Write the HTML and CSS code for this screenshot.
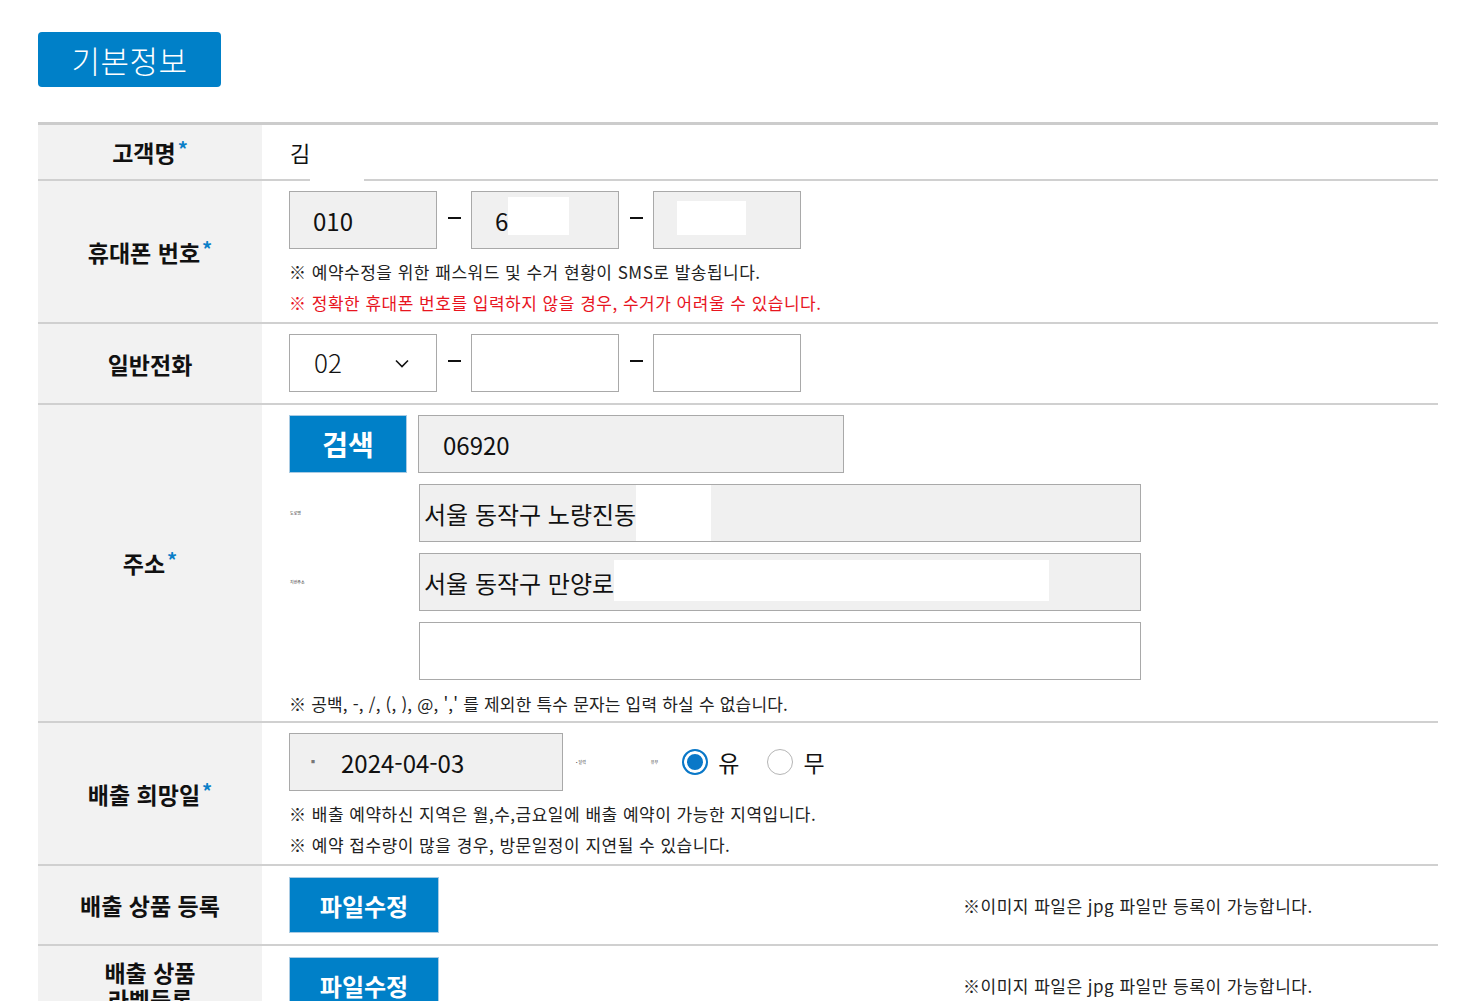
FILE: index.html
```html
<!DOCTYPE html>
<html lang="ko">
<head>
<meta charset="utf-8">
<title>기본정보</title>
<link rel="stylesheet" href="styles.css">
</head>
<body>
<div class="page">
  <div class="title">기본정보</div>

  <div class="form">
    <div class="row">
      <div class="label">고객명<span class="req">*</span></div>
      <div class="cell cell-name">김<span class="gap-mask"></span></div>
    </div>

    <div class="row">
      <div class="label">휴대폰 번호<span class="req">*</span></div>
      <div class="cell">
        <div class="line">
          <div class="field grey phone">010</div>
          <span class="dash"><i></i></span>
          <div class="field grey phone">6<span class="mask mask-a"></span></div>
          <span class="dash"><i></i></span>
          <div class="field grey phone"><span class="mask mask-b"></span></div>
        </div>
        <div class="hints">
          <p>※ 예약수정을 위한 패스워드 및 수거 현황이 SMS로 발송됩니다.</p>
          <p class="red">※ 정확한 휴대폰 번호를 입력하지 않을 경우, 수거가 어려울 수 있습니다.</p>
        </div>
      </div>
    </div>

    <div class="row">
      <div class="label">일반전화</div>
      <div class="cell cell-tel">
        <div class="line">
          <div class="field select phone"><span class="sel-val">02</span>
            <svg class="chev" width="14" height="9" viewBox="0 0 14 9"><polyline points="1,1.5 7,7.5 13,1.5" fill="none" stroke="#111" stroke-width="1.6"/></svg>
          </div>
          <span class="dash"><i></i></span>
          <div class="field white phone"></div>
          <span class="dash"><i></i></span>
          <div class="field white phone"></div>
        </div>
      </div>
    </div>

    <div class="row">
      <div class="label">주소<span class="req">*</span></div>
      <div class="cell cell-addr">
        <div class="line">
          <button class="btn btn-search">검색</button>
          <div class="field grey zip">06920</div>
        </div>
        <div class="line addr-line">
          <span class="tiny-label">도로명</span>
          <div class="field grey addr">서울 동작구 노량진동<span class="mask mask-c"></span></div>
        </div>
        <div class="line addr-line">
          <span class="tiny-label">지번주소</span>
          <div class="field grey addr">서울 동작구 만양로<span class="mask mask-d"></span></div>
        </div>
        <div class="line addr-line">
          <span class="tiny-label"></span>
          <div class="field white addr detail"></div>
        </div>
        <p class="hint-special">※ 공백, -, /, (, ), @, ',' 를 제외한 특수 문자는 입력 하실 수 없습니다.</p>
      </div>
    </div>

    <div class="row">
      <div class="label">배출 희망일<span class="req">*</span></div>
      <div class="cell">
        <div class="line">
          <div class="field grey date"><span class="tiny-icon">■</span>2024-04-03</div>
          <span class="tiny t1">• 달력</span>
          <span class="tiny t2">유무</span>
          <span class="radio checked"></span><span class="radio-text">유</span>
          <span class="radio"></span><span class="radio-text">무</span>
        </div>
        <div class="hints">
          <p>※ 배출 예약하신 지역은 월,수,금요일에 배출 예약이 가능한 지역입니다.</p>
          <p>※ 예약 접수량이 많을 경우, 방문일정이 지연될 수 있습니다.</p>
        </div>
      </div>
    </div>

    <div class="row">
      <div class="label">배출 상품 등록</div>
      <div class="cell cell-file">
        <button class="btn btn-file">파일수정</button>
        <span class="file-note">※이미지 파일은 jpg 파일만 등록이 가능합니다.</span>
      </div>
    </div>

    <div class="row">
      <div class="label label-two">배출 상품<br>라벨등록</div>
      <div class="cell cell-file">
        <button class="btn btn-file">파일수정</button>
        <span class="file-note">※이미지 파일은 jpg 파일만 등록이 가능합니다.</span>
      </div>
    </div>
  </div>
</div>
</body>
</html>
```

FILE: styles.css
```css
* { box-sizing: border-box; }

body {
  margin: 0;
  background: #fff;
  color: #111;
  font-family: "Noto Sans CJK KR", "Noto Sans", sans-serif;
}

.page {
  padding: 32px 33px 0 38px;
}

.title {
  display: flex;
  align-items: center;
  justify-content: center;
  width: 183px;
  height: 55px;
  background: #0080c8;
  color: #fff;
  border-radius: 4px;
  font-size: 31px;
  font-weight: 300;
  letter-spacing: 0.5px;
}

.form {
  margin-top: 35px;
  width: 1400px;
  border-top: 3px solid #cccccc;
}

.row {
  display: flex;
  border-bottom: 2px solid #d0d0d0;
}

.label {
  flex: 0 0 224px;
  background: #f2f2f2;
  display: flex;
  align-items: center;
  justify-content: center;
  text-align: center;
  font-size: 23px;
  font-weight: 700;
  line-height: 30px;
  color: #111;
}

.label-two {
  line-height: 27px;
  padding-top: 2px;
}

.req {
  color: #0a7fc8;
  font-size: 20px;
  margin-left: 2px;
  position: relative;
  top: -3px;
}

.cell {
  flex: 1;
  padding: 10px 27px 4px;
  position: relative;
}

.cell-name {
  height: 54px;
  padding: 0 28px;
  display: flex;
  align-items: center;
  font-size: 22px;
}

.gap-mask {
  position: absolute;
  left: 48px;
  bottom: -2px;
  width: 54px;
  height: 2px;
  background: #fff;
}

.line {
  display: flex;
  align-items: center;
}

.field {
  height: 58px;
  border: 1px solid #a9a9a9;
  display: flex;
  align-items: center;
  font-size: 24px;
  color: #111;
  position: relative;
}

.grey { background: #f0f0f0; }
.white { background: #fff; }

.phone {
  width: 148px;
  padding-left: 23px;
}

.select {
  background: #fff;
  padding-left: 24px;
}

.sel-val {
  font-size: 26px;
  font-weight: 300;
  margin-top: -4px;
}

.chev {
  position: absolute;
  left: 105px;
  top: 24px;
}

.dash {
  width: 34px;
  display: flex;
  justify-content: center;
  margin-top: -4px;
}

.dash i {
  display: block;
  width: 13px;
  height: 2px;
  background: #111;
}

.mask {
  display: inline-block;
  background: #fff;
}

.mask-a { width: 61px; height: 38px; margin-top: -8px; }
.mask-b { width: 69px; height: 34px; margin-top: -4px; }
.mask-c { width: 75px; height: 56px; }
.mask-d { width: 435px; height: 41px; margin-top: -3px; }

.hints {
  margin-top: 7px;
}

.hints p {
  margin: 0;
  font-size: 17px;
  letter-spacing: 0.5px;
  line-height: 31px;
  color: #222;
}

.hints p.red { color: #e8151f; }

.cell-tel { padding-bottom: 11px; }

.cell-addr { padding-bottom: 2px; }

.btn {
  border: 1px solid #a9cbe3;
  background: #0080c8;
  color: #fff;
  font-family: inherit;
  font-weight: 700;
  padding: 0;
  cursor: pointer;
}

.btn-search {
  width: 118px;
  height: 58px;
  font-size: 28px;
  margin-right: 11px;
}

.zip {
  width: 426px;
  padding-left: 24px;
}

.addr-line { margin-top: 11px; }

.tiny-label {
  flex: 0 0 130px;
  font-size: 4px;
  line-height: 4px;
  padding-left: 1px;
  color: #333;
}

.addr {
  width: 722px;
  padding-left: 4px;
}

.hint-special {
  margin: 8px 0 0;
  font-size: 17px;
  line-height: 31px;
  color: #222;
  letter-spacing: 0.2px;
}

.date {
  width: 274px;
  padding-left: 21px;
}

.tiny-icon {
  font-size: 4px;
  color: #777;
  margin-right: 26px;
}

.tiny {
  font-size: 4px;
  color: #333;
}

.t1 { margin-left: 13px; }
.t2 { margin-left: 65px; }

.radio {
  display: inline-block;
  width: 26px;
  height: 26px;
  border-radius: 50%;
  border: 1px solid #b5b5b5;
  background: #fff;
  margin-left: 28px;
  flex: 0 0 26px;
}

.radio.checked {
  margin-left: 24px;
  border: 2px solid #0a78c8;
  box-shadow: inset 0 0 0 3px #fff;
  background: #0a78c8;
}

.radio-text {
  font-size: 23px;
  margin-left: 10px;
}

.cell-file {
  min-height: 78px;
  display: flex;
  align-items: center;
  padding: 0 27px;
}

.btn-file {
  width: 150px;
  height: 56px;
  font-size: 24px;
}

.file-note {
  margin-left: 524px;
  font-size: 17px;
  letter-spacing: 0.5px;
  color: #222;
}
```
